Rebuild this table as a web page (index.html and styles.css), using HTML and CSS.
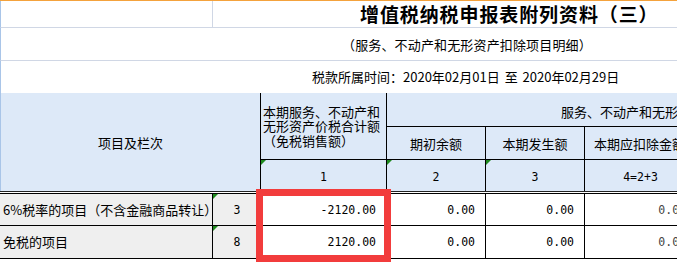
FILE: index.html
```html
<!DOCTYPE html>
<html lang="zh">
<head>
<meta charset="utf-8">
<title>增值税纳税申报表附列资料（三）</title>
<link rel="stylesheet" href="styles.css">
</head>
<body>
<div class="sheet">
  <div class="row r1">
    <div class="cell left"></div>
    <div class="cell title">增值税纳税申报表附列资料（三）</div>
  </div>
  <div class="row r2">
    <div class="cell subtitle">（服务、不动产和无形资产扣除项目明细）</div>
  </div>
  <div class="row r3">
    <div class="cell period">税款所属时间：2020年02月01日 至 2020年02月29日</div>
  </div>
  <div class="grid">
    <div class="h item">项目及栏次</div>
    <div class="h total">本期服务、不动产和<br>无形资产价税合计额<br>（免税销售额）</div>
    <div class="h group">服务、不动产和无形资产扣除项目</div>
    <div class="h sub c4">期初余额</div>
    <div class="h sub c5">本期发生额</div>
    <div class="h sub c6">本期应扣除金额</div>
    <div class="h num c3 mark">1</div>
    <div class="h num c4 mark">2</div>
    <div class="h num c5 mark">3</div>
    <div class="h num c6">4=2+3</div>
    <div class="sep"></div>
    <div class="label d1">6%税率的项目（不含金融商品转让）</div>
    <div class="line d1 mark">3</div>
    <div class="val d1 c3">-2120.00</div>
    <div class="val d1 c4">0.00</div>
    <div class="val d1 c5">0.00</div>
    <div class="val d1 c6 dim">0.00</div>
    <div class="label d2">免税的项目</div>
    <div class="line d2 mark">8</div>
    <div class="val d2 c3">2120.00</div>
    <div class="val d2 c4">0.00</div>
    <div class="val d2 c5">0.00</div>
    <div class="val d2 c6 dim">0.00</div>
  </div>
  <div class="highlight"></div>
</div>
</body>
</html>
```

FILE: styles.css
```css
html, body {
  margin: 0;
  padding: 0;
  background: #fff;
  overflow: hidden;
}

body {
  width: 677px;
  height: 265px;
  font-family: "Noto Sans CJK SC", "Noto Sans", sans-serif;
  font-size: 13px;
  color: #000;
}

.sheet {
  position: relative;
  width: 696px;
  border-top: 1px solid #f4a23c;
}

.row {
  box-sizing: border-box;
  display: grid;
  border-left: 1px solid #a9c5e8;
  border-bottom: 1px solid #d0d7e5;
}

.cell {
  display: flex;
  align-items: center;
  white-space: nowrap;
  line-height: 16px;
}

.r1 {
  height: 27px;
  grid-template-columns: 212px 1fr;
}

.r1 .left {
  border-right: 1px solid #d0d7e5;
}

.title {
  padding-left: 147px;
  font-size: 19px;
  font-weight: 700;
  letter-spacing: 0.9px;
  line-height: 22px;
  padding-bottom: 1px;
}

.r2 {
  height: 33px;
  grid-template-columns: 1fr;
}

.subtitle {
  padding-left: 341px;
  padding-top: 1px;
  letter-spacing: 0.15px;
}

.r3 {
  height: 32px;
  grid-template-columns: 1fr;
  border-bottom: none;
}

.period {
  padding-left: 311px;
  padding-bottom: 1px;
  word-spacing: 2px;
}

.grid {
  display: grid;
  grid-template-columns: 213px 48px 126px 99px 99px 112px;
  grid-template-rows: 34px 33px 31px 3px 32px 33px;
}

.grid > div {
  box-sizing: border-box;
  position: relative;
  display: flex;
  align-items: center;
  white-space: nowrap;
  line-height: 16px;
}

.h {
  background: #dde9f8;
}

.item {
  grid-column: 1 / 3;
  grid-row: 1 / 4;
  justify-content: center;
  border-left: 1px solid #a9c5e8;
  border-right: 1px solid #000;
  padding-top: 2px;
}

.total {
  grid-column: 3;
  grid-row: 1 / 3;
  border-right: 1px solid #000;
  border-bottom: 1px solid #000;
  padding-left: 2px;
  line-height: 14.5px !important;
  padding-top: 1px;
}

.group {
  grid-column: 4 / 7;
  grid-row: 1;
  border-bottom: 1px solid #000;
  padding-left: 174px;
  padding-top: 4px;
  overflow: hidden;
}

.sub {
  grid-row: 2;
  justify-content: center;
  border-right: 1px solid #000;
  border-bottom: 1px solid #000;
  padding-top: 1px;
}

.sub.c6 {
  justify-content: flex-start;
  padding-left: 9px;
}

.num {
  grid-row: 3;
  justify-content: center;
  border-right: 1px solid #000;
  padding-top: 3px;
  font-family: "DejaVu Sans Mono", "Liberation Mono", monospace;
  font-size: 11.5px;
}

.c3 { grid-column: 3; }
.c4 { grid-column: 4; }
.c5 { grid-column: 5; }
.c6 { grid-column: 6; }

.sep {
  grid-column: 1 / 7;
  grid-row: 4;
  border-top: 1px solid #222;
  border-bottom: 1px solid #000;
  background: #fff;
}

.d1 { grid-row: 5; }
.d2 { grid-row: 6; }

.label {
  grid-column: 1;
  background: #efefef;
  border-right: 1px solid #000;
  border-bottom: 1px solid #000;
  padding-left: 3px;
}

.line {
  grid-column: 2;
  background: #efefef;
  border-right: 1px solid #000;
  border-bottom: 1px solid #000;
  justify-content: center;
  padding-left: 1px;
  font-family: "DejaVu Sans Mono", "Liberation Mono", monospace;
  font-size: 11.5px;
}

.val {
  background: #fff;
  border-right: 1px solid #000;
  border-bottom: 1px solid #000;
  justify-content: flex-end;
  padding-right: 10px;
  font-family: "DejaVu Sans Mono", "Liberation Mono", monospace;
  font-size: 11.5px;
}

.dim {
  color: #444;
}

.mark::before {
  content: "";
  position: absolute;
  top: 0;
  left: 0;
  width: 0;
  height: 0;
  border-top: 5px solid #1e8a1e;
  border-right: 5px solid transparent;
}

.highlight {
  position: absolute;
  left: 256px;
  top: 188px;
  width: 135px;
  height: 73px;
  box-sizing: border-box;
  border: 7px solid #f23c3c;
}
```
